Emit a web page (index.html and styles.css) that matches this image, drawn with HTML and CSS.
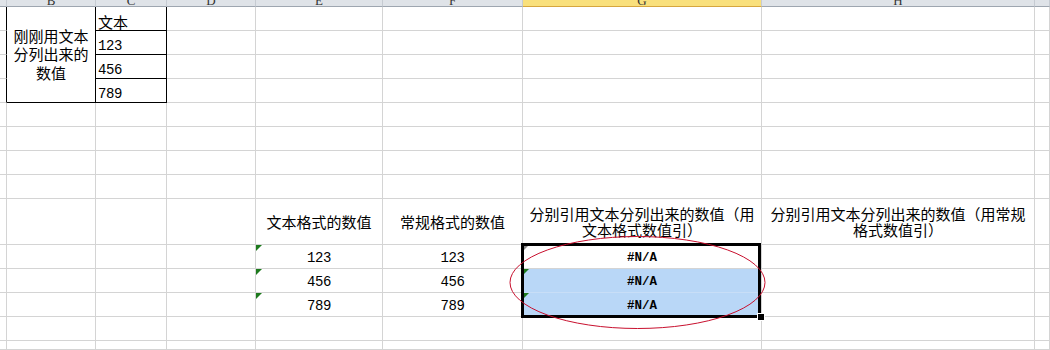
FILE: index.html
```html
<!DOCTYPE html>
<html lang="zh-CN">
<head>
<meta charset="utf-8">
<title>Sheet</title>
<link rel="stylesheet" href="styles.css">
</head>
<body>
<div class="sheet">
  <!-- header row -->
  <div class="c hd"></div>
  <div class="c hd"><span>B</span></div>
  <div class="c hd"><span>C</span></div>
  <div class="c hd"><span>D</span></div>
  <div class="c hd"><span>E</span></div>
  <div class="c hd"><span>F</span></div>
  <div class="c hd hd-sel"><span>G</span></div>
  <div class="c hd"><span>H</span></div>
  <div class="c hd"></div>

  <!-- row 1 -->
  <div class="c bk-r"></div>
  <div class="c merged bk-r bk-b cj">刚刚用文本分列出来的数值</div>
  <div class="c bot bk-r bk-b cj">文本</div>
  <div class="c"></div><div class="c"></div><div class="c"></div><div class="c"></div><div class="c"></div><div class="c"></div>

  <!-- row 2 -->
  <div class="c bk-r"></div>
  <div class="c bot bk-r bk-b num">123</div>
  <div class="c"></div><div class="c"></div><div class="c"></div><div class="c"></div><div class="c"></div><div class="c"></div>

  <!-- row 3 -->
  <div class="c bk-r"></div>
  <div class="c bot bk-r bk-b num">456</div>
  <div class="c"></div><div class="c"></div><div class="c"></div><div class="c"></div><div class="c"></div><div class="c"></div>

  <!-- row 4 -->
  <div class="c bk-r"></div>
  <div class="c bot bk-r bk-b num">789</div>
  <div class="c"></div><div class="c"></div><div class="c"></div><div class="c"></div><div class="c"></div><div class="c"></div>

  <!-- rows 5-8 -->
  <div class="c"></div><div class="c"></div><div class="c"></div><div class="c"></div><div class="c"></div><div class="c"></div><div class="c"></div><div class="c"></div><div class="c"></div>
  <div class="c"></div><div class="c"></div><div class="c"></div><div class="c"></div><div class="c"></div><div class="c"></div><div class="c"></div><div class="c"></div><div class="c"></div>
  <div class="c"></div><div class="c"></div><div class="c"></div><div class="c"></div><div class="c"></div><div class="c"></div><div class="c"></div><div class="c"></div><div class="c"></div>
  <div class="c"></div><div class="c"></div><div class="c"></div><div class="c"></div><div class="c"></div><div class="c"></div><div class="c"></div><div class="c"></div><div class="c"></div>

  <!-- row 9 -->
  <div class="c"></div><div class="c"></div><div class="c"></div><div class="c"></div>
  <div class="c mid cj">文本格式的数值</div>
  <div class="c mid cj">常规格式的数值</div>
  <div class="c mid cj wrap">分别引用文本分列出来的数值（用文本格式数值引）</div>
  <div class="c mid cj wrap">分别引用文本分列出来的数值（用常规格式数值引）</div>
  <div class="c"></div>

  <!-- row 10 -->
  <div class="c"></div><div class="c"></div><div class="c"></div><div class="c"></div>
  <div class="c val num tri">123</div>
  <div class="c val num">123</div>
  <div class="c val na tri tri-gray">#N/A</div>
  <div class="c"></div><div class="c"></div>

  <!-- row 11 -->
  <div class="c"></div><div class="c"></div><div class="c"></div><div class="c"></div>
  <div class="c val num tri">456</div>
  <div class="c val num">456</div>
  <div class="c val na tri selbg">#N/A</div>
  <div class="c"></div><div class="c"></div>

  <!-- row 12 -->
  <div class="c"></div><div class="c"></div><div class="c"></div><div class="c"></div>
  <div class="c val num tri">789</div>
  <div class="c val num">789</div>
  <div class="c val na tri selbg">#N/A</div>
  <div class="c"></div><div class="c"></div>

  <!-- rows 13-14 -->
  <div class="c"></div><div class="c"></div><div class="c"></div><div class="c"></div><div class="c"></div><div class="c"></div><div class="c"></div><div class="c"></div><div class="c"></div>
  <div class="c"></div><div class="c"></div><div class="c"></div><div class="c"></div><div class="c"></div><div class="c"></div><div class="c"></div><div class="c"></div><div class="c"></div>

  <!-- overlays -->
  <div class="selection"></div>
  <div class="handle"></div>
  <svg class="ellipse" width="1050" height="350" viewBox="0 0 1050 350">
    <ellipse cx="637.5" cy="282.5" rx="127.5" ry="46" fill="none" stroke="#c8102e" stroke-width="1"/>
  </svg>
</div>
</body>
</html>
```

FILE: styles.css
```css
html, body {
  margin: 0;
  padding: 0;
  background: #ffffff;
}

.sheet {
  position: relative;
  width: 1050px;
  height: 350px;
  overflow: hidden;
  display: grid;
  grid-template-columns: 7px 89px 71px 89px 127px 140px 239px 273px 15px;
  grid-template-rows: 7px repeat(8, 24px) 46px repeat(4, 24px) 9px;
  font-family: "Noto Sans CJK SC", sans-serif;
  font-size: 15px;
  color: #000;
}

.c {
  box-sizing: border-box;
  border-right: 1px solid #d4d4d4;
  border-bottom: 1px solid #d4d4d4;
  min-width: 0;
  overflow: visible;
  position: relative;
}

.hd {
  background: #dfe3e8;
  border-right: 1px solid #c6cbd2;
  border-bottom: 1px solid #9ea6b0;
  overflow: hidden;
  display: flex;
  align-items: flex-end;
  justify-content: center;
  font-family: "Liberation Serif", serif;
  font-size: 13px;
  color: #333;
}

.hd span {
  line-height: 13px;
  margin-bottom: -1px;
}

.hd-sel {
  background: #f9e07c;
  border-bottom: 1px solid #d6a63e;
}

.bk-r { border-right-color: #000; }
.bk-b { border-bottom-color: #000; }

.cj {
  font-family: "Noto Sans CJK SC", sans-serif;
  font-size: 15px;
}

.num {
  font-family: "Liberation Mono", monospace;
  font-size: 14px;
  letter-spacing: -0.4px;
}

.merged {
  grid-row: span 4;
  display: flex;
  align-items: center;
  justify-content: center;
  text-align: center;
  line-height: 18.5px;
  padding: 0 6px;
}

.bot {
  display: flex;
  align-items: flex-end;
  padding-left: 2px;
  line-height: 17px;
}

.bot.num {
  padding-bottom: 0;
  line-height: 15px;
}

.mid {
  display: flex;
  align-items: center;
  justify-content: center;
  text-align: center;
  line-height: 16.5px;
  padding: 1px 4px 0;
}

.val {
  display: flex;
  align-items: flex-end;
  justify-content: center;
  line-height: 16px;
  padding-bottom: 2px;
}

.na {
  font-family: "Liberation Mono", monospace;
  font-size: 12.5px;
  font-weight: 700;
}

.selbg {
  background: #b9d7f7;
  border-bottom-color: #c8def7;
}

.tri::before {
  content: "";
  position: absolute;
  left: 0;
  top: 0;
  width: 0;
  height: 0;
  border-top: 6px solid #1d7a1d;
  border-right: 6px solid transparent;
}

.tri-gray::before {
  border-top-color: #8a8a8a;
}

.selection {
  position: absolute;
  left: 521px;
  top: 243px;
  width: 240px;
  height: 75px;
  box-sizing: border-box;
  border: 3px solid #000;
  pointer-events: none;
}

.handle {
  position: absolute;
  left: 758px;
  top: 314px;
  width: 6px;
  height: 6px;
  background: #000;
  box-shadow: 0 0 0 1px #fff;
}

.ellipse {
  position: absolute;
  left: 0;
  top: 0;
  pointer-events: none;
}
```
